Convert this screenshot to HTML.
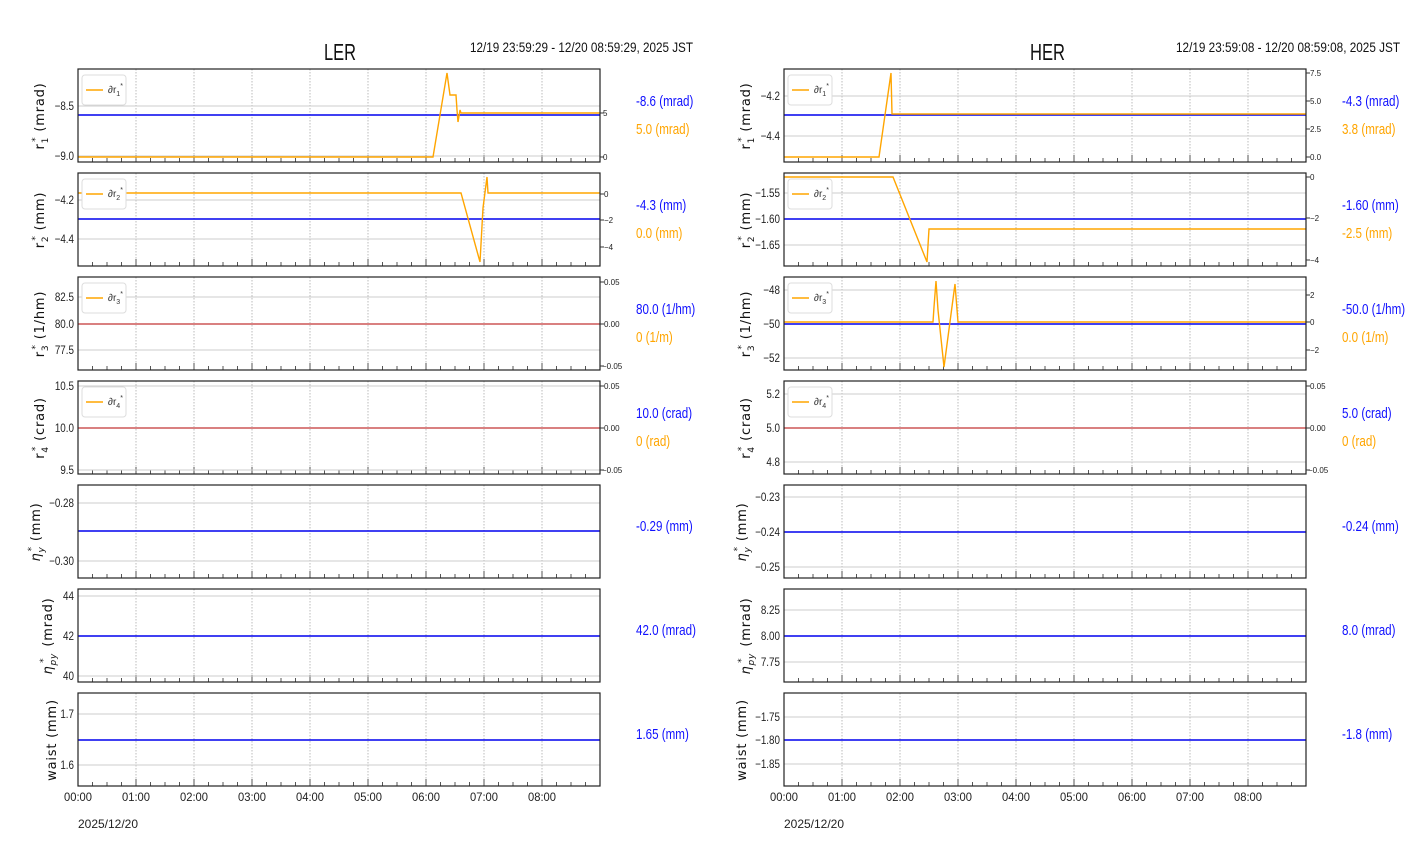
<!DOCTYPE html>
<html><head><meta charset="utf-8"><style>
html,body{margin:0;padding:0;background:#fff;width:1412px;height:864px;overflow:hidden}
svg{display:block}
text{font-family:"Liberation Sans Narrow","Liberation Sans",sans-serif}
.t{font-size:12px;fill:#222}
.r{font-size:8px;fill:#222}
.yl{font-family:"DejaVu Sans","Liberation Sans",sans-serif;font-size:13px;fill:#111;letter-spacing:0.8px}
.b{font-size:14.5px;fill:#1010ff}
.o{font-size:14.5px;fill:#ffa500}
.g{stroke:#ccc;stroke-width:1}
.fr{fill:none;stroke:#222;stroke-width:1.2}
.bl{stroke:#0000ee;stroke-width:1.6}
.or{fill:none;stroke:#ffa500;stroke-width:1.4}
.lg{fill:#fff;stroke:#ddd;stroke-width:1}
.lt{font-size:10px;fill:#333}
</style></head><body>
<svg width="1412" height="864" viewBox="0 0 1412 864" xmlns="http://www.w3.org/2000/svg">
<defs>
<g id="vg">
<path d="M58 0V93M116 0V93M174 0V93M232 0V93M290 0V93M348 0V93M406 0V93M464 0V93" stroke="#bbb" stroke-width="1" stroke-dasharray="1.5,1.5"/>
<path d="M58 93v-7M116 93v-7M174 93v-7M232 93v-7M290 93v-7M348 93v-7M406 93v-7M464 93v-7" stroke="#555" stroke-width="1"/>
<path d="M14.5 93v-4M29 93v-4M43.5 93v-4M72.5 93v-4M87 93v-4M101.5 93v-4M130.5 93v-4M145 93v-4M159.5 93v-4M188.5 93v-4M203 93v-4M217.5 93v-4M246.5 93v-4M261 93v-4M275.5 93v-4M304.5 93v-4M319 93v-4M333.5 93v-4M362.5 93v-4M377 93v-4M391.5 93v-4M420.5 93v-4M435 93v-4M449.5 93v-4M478.5 93v-4M493 93v-4M507.5 93v-4" stroke="#555" stroke-width="1"/>
</g>
</defs>

<!-- titles -->
<text x="324" y="60" textLength="32" lengthAdjust="spacingAndGlyphs" font-size="23" fill="#111">LER</text>
<text x="470" y="52" textLength="223" lengthAdjust="spacingAndGlyphs" font-size="14" fill="#111">12/19 23:59:29 - 12/20 08:59:29, 2025 JST</text>
<text x="1030" y="60" textLength="35" lengthAdjust="spacingAndGlyphs" font-size="23" fill="#111">HER</text>
<text x="1176" y="52" textLength="224" lengthAdjust="spacingAndGlyphs" font-size="14" fill="#111">12/19 23:59:08 - 12/20 08:59:08, 2025 JST</text>

<!-- ================= LEFT ================= -->
<g>
<use href="#vg" x="78" y="69"/>
<path class="g" d="M78 106H600M78 156H600"/>
<line class="bl" x1="78" y1="115" x2="600" y2="115"/>
<polyline class="or" points="78,157 433,157 447,73 450,95 456,95 457,110 458,122 460,110 461,113 600,113"/>
<rect class="fr" x="78" y="69" width="522" height="93"/>
<path d="M600 113h4M600 157h4" stroke="#333"/>
<text class="r" x="603" y="116">5</text><text class="r" x="603" y="160">0</text>
<rect class="lg" x="82" y="75" width="44" height="30" rx="3"/><line x1="86" y1="90" x2="103" y2="90" stroke="#ffa500" stroke-width="1.5"/><text class="lt" x="108" y="93">∂r<tspan font-size="7" dy="3">1</tspan><tspan font-size="7" dy="-8">*</tspan></text>
<text class="yl" transform="translate(44,116) rotate(-90)" text-anchor="middle">r<tspan font-size="9" dy="4">1</tspan><tspan font-size="9" dx="-5" dy="-10">*</tspan><tspan dy="6"> (mrad)</tspan></text>

<use href="#vg" x="78" y="173"/>
<path class="g" d="M78 200H600M78 239H600"/>
<line class="bl" x1="78" y1="219" x2="600" y2="219"/>
<polyline class="or" points="78,193 461,193 480,262 483,208 487,177 488,193 600,193"/>
<rect class="fr" x="78" y="173" width="522" height="93"/>
<path d="M600 194h4M600 220h4M600 247h4" stroke="#333"/>
<text class="r" x="604" y="197">0</text><text class="r" x="604" y="223">−2</text><text class="r" x="604" y="250">−4</text>
<rect class="lg" x="82" y="179" width="44" height="30" rx="3"/><line x1="86" y1="194" x2="103" y2="194" stroke="#ffa500" stroke-width="1.5"/><text class="lt" x="108" y="197">∂r<tspan font-size="7" dy="3">2</tspan><tspan font-size="7" dy="-8">*</tspan></text>
<text class="yl" transform="translate(44,220) rotate(-90)" text-anchor="middle">r<tspan font-size="9" dy="4">2</tspan><tspan font-size="9" dx="-5" dy="-10">*</tspan><tspan dy="6"> (mm)</tspan></text>

<use href="#vg" x="78" y="277"/>
<path class="g" d="M78 297H600M78 324H600M78 350H600"/>
<line x1="78" y1="324" x2="600" y2="324" stroke="#d98080" stroke-width="2"/>
<rect class="fr" x="78" y="277" width="522" height="93"/>
<path d="M600 282h4M600 324h4M600 366h4" stroke="#333"/>
<text class="r" x="604" y="285">0.05</text><text class="r" x="604" y="327">0.00</text><text class="r" x="602" y="369">−0.05</text>
<rect class="lg" x="82" y="283" width="44" height="30" rx="3"/><line x1="86" y1="298" x2="103" y2="298" stroke="#ffa500" stroke-width="1.5"/><text class="lt" x="108" y="301">∂r<tspan font-size="7" dy="3">3</tspan><tspan font-size="7" dy="-8">*</tspan></text>
<text class="yl" transform="translate(44,324) rotate(-90)" text-anchor="middle">r<tspan font-size="9" dy="4">3</tspan><tspan font-size="9" dx="-5" dy="-10">*</tspan><tspan dy="6"> (1/hm)</tspan></text>

<use href="#vg" x="78" y="381"/>
<path class="g" d="M78 386H600M78 428H600M78 470H600"/>
<line x1="78" y1="428" x2="600" y2="428" stroke="#d98080" stroke-width="2"/>
<rect class="fr" x="78" y="381" width="522" height="93"/>
<path d="M600 386h4M600 428h4M600 470h4" stroke="#333"/>
<text class="r" x="604" y="389">0.05</text><text class="r" x="604" y="431">0.00</text><text class="r" x="602" y="473">−0.05</text>
<rect class="lg" x="82" y="387" width="44" height="30" rx="3"/><line x1="86" y1="402" x2="103" y2="402" stroke="#ffa500" stroke-width="1.5"/><text class="lt" x="108" y="405">∂r<tspan font-size="7" dy="3">4</tspan><tspan font-size="7" dy="-8">*</tspan></text>
<text class="yl" transform="translate(44,428) rotate(-90)" text-anchor="middle">r<tspan font-size="9" dy="4">4</tspan><tspan font-size="9" dx="-5" dy="-10">*</tspan><tspan dy="6"> (crad)</tspan></text>

<use href="#vg" x="78" y="485"/>
<path class="g" d="M78 503H600M78 561H600"/>
<line class="bl" x1="78" y1="531" x2="600" y2="531"/>
<rect class="fr" x="78" y="485" width="522" height="93"/>
<text class="yl" transform="translate(40,532) rotate(-90)" text-anchor="middle"><tspan font-style="italic">η</tspan><tspan font-size="9" font-style="italic" dy="4">y</tspan><tspan font-size="9" dx="-5" dy="-10">*</tspan><tspan dy="6"> (mm)</tspan></text>

<use href="#vg" x="78" y="589"/>
<path class="g" d="M78 596H600M78 636H600M78 676H600"/>
<line class="bl" x1="78" y1="636" x2="600" y2="636"/>
<rect class="fr" x="78" y="589" width="522" height="93"/>
<text class="yl" transform="translate(52,636) rotate(-90)" text-anchor="middle"><tspan font-style="italic">η</tspan><tspan font-size="9" font-style="italic" dy="4">py</tspan><tspan font-size="9" dx="-10" dy="-10">*</tspan><tspan dy="6" dx="6"> (mrad)</tspan></text>

<use href="#vg" x="78" y="693"/>
<path class="g" d="M78 714H600M78 765H600"/>
<line class="bl" x1="78" y1="740" x2="600" y2="740"/>
<rect class="fr" x="78" y="693" width="522" height="93"/>
<text class="yl" transform="translate(56,740) rotate(-90)" text-anchor="middle">waist (mm)</text>

<!-- left y tick labels (condensed) -->
<g transform="translate(74,0) scale(0.82,1) translate(-74,0)" class="t" text-anchor="end">
<text x="74" y="110">−8.5</text><text x="74" y="160">−9.0</text>
<text x="74" y="204">−4.2</text><text x="74" y="243">−4.4</text>
<text x="74" y="301">82.5</text><text x="74" y="328">80.0</text><text x="74" y="354">77.5</text>
<text x="74" y="390">10.5</text><text x="74" y="432">10.0</text><text x="74" y="474">9.5</text>
<text x="74" y="507">−0.28</text><text x="74" y="565">−0.30</text>
<text x="74" y="600">44</text><text x="74" y="640">42</text><text x="74" y="680">40</text>
<text x="74" y="718">1.7</text><text x="74" y="769">1.6</text>
</g>
<!-- left value labels -->
<g transform="translate(636,0) scale(0.8,1) translate(-636,0)">
<text class="b" x="636" y="106">-8.6 (mrad)</text><text class="o" x="636" y="134">5.0 (mrad)</text>
<text class="b" x="636" y="210">-4.3 (mm)</text><text class="o" x="636" y="238">0.0 (mm)</text>
<text class="b" x="636" y="314">80.0 (1/hm)</text><text class="o" x="636" y="342">0 (1/m)</text>
<text class="b" x="636" y="418">10.0 (crad)</text><text class="o" x="636" y="446">0 (rad)</text>
<text class="b" x="636" y="531">-0.29 (mm)</text>
<text class="b" x="636" y="635">42.0 (mrad)</text>
<text class="b" x="636" y="739">1.65 (mm)</text>
</g>

<g class="t">
<text x="64" y="801" textLength="28" lengthAdjust="spacingAndGlyphs">00:00</text><text x="122" y="801" textLength="28" lengthAdjust="spacingAndGlyphs">01:00</text><text x="180" y="801" textLength="28" lengthAdjust="spacingAndGlyphs">02:00</text><text x="238" y="801" textLength="28" lengthAdjust="spacingAndGlyphs">03:00</text><text x="296" y="801" textLength="28" lengthAdjust="spacingAndGlyphs">04:00</text><text x="354" y="801" textLength="28" lengthAdjust="spacingAndGlyphs">05:00</text><text x="412" y="801" textLength="28" lengthAdjust="spacingAndGlyphs">06:00</text><text x="470" y="801" textLength="28" lengthAdjust="spacingAndGlyphs">07:00</text><text x="528" y="801" textLength="28" lengthAdjust="spacingAndGlyphs">08:00</text>
</g>
<text class="t" x="78" y="828" font-size="14" textLength="60" lengthAdjust="spacingAndGlyphs">2025/12/20</text>
</g>

<!-- ================= RIGHT ================= -->
<g>
<use href="#vg" x="784" y="69"/>
<path class="g" d="M784 96H1306M784 136H1306"/>
<line class="bl" x1="784" y1="115" x2="1306" y2="115"/>
<polyline class="or" points="784,157 879,157 891,73 892,114 1306,114"/>
<rect class="fr" x="784" y="69" width="522" height="93"/>
<path d="M1306 73h4M1306 101h4M1306 129h4M1306 157h4" stroke="#333"/>
<text class="r" x="1310" y="76">7.5</text><text class="r" x="1310" y="104">5.0</text><text class="r" x="1310" y="132">2.5</text><text class="r" x="1310" y="160">0.0</text>
<rect class="lg" x="788" y="75" width="44" height="30" rx="3"/><line x1="792" y1="90" x2="809" y2="90" stroke="#ffa500" stroke-width="1.5"/><text class="lt" x="814" y="93">∂r<tspan font-size="7" dy="3">1</tspan><tspan font-size="7" dy="-8">*</tspan></text>
<text class="yl" transform="translate(750,116) rotate(-90)" text-anchor="middle">r<tspan font-size="9" dy="4">1</tspan><tspan font-size="9" dx="-5" dy="-10">*</tspan><tspan dy="6"> (mrad)</tspan></text>

<use href="#vg" x="784" y="173"/>
<path class="g" d="M784 193H1306M784 219H1306M784 245H1306"/>
<line class="bl" x1="784" y1="219" x2="1306" y2="219"/>
<polyline class="or" points="784,177 893,177 927,262 929,229 1306,229"/>
<rect class="fr" x="784" y="173" width="522" height="93"/>
<path d="M1306 177h4M1306 218h4M1306 260h4" stroke="#333"/>
<text class="r" x="1310" y="180">0</text><text class="r" x="1310" y="221">−2</text><text class="r" x="1310" y="263">−4</text>
<rect class="lg" x="788" y="179" width="44" height="30" rx="3"/><line x1="792" y1="194" x2="809" y2="194" stroke="#ffa500" stroke-width="1.5"/><text class="lt" x="814" y="197">∂r<tspan font-size="7" dy="3">2</tspan><tspan font-size="7" dy="-8">*</tspan></text>
<text class="yl" transform="translate(750,220) rotate(-90)" text-anchor="middle">r<tspan font-size="9" dy="4">2</tspan><tspan font-size="9" dx="-5" dy="-10">*</tspan><tspan dy="6"> (mm)</tspan></text>

<use href="#vg" x="784" y="277"/>
<path class="g" d="M784 290H1306M784 324H1306M784 358H1306"/>
<line class="bl" x1="784" y1="324" x2="1306" y2="324"/>
<polyline class="or" points="784,322 933,322 934,307 936,281 938,310 944,367 955,284 958,322 1306,322"/>
<rect class="fr" x="784" y="277" width="522" height="93"/>
<path d="M1306 295h4M1306 322h4M1306 350h4" stroke="#333"/>
<text class="r" x="1310" y="298">2</text><text class="r" x="1310" y="325">0</text><text class="r" x="1310" y="353">−2</text>
<rect class="lg" x="788" y="283" width="44" height="30" rx="3"/><line x1="792" y1="298" x2="809" y2="298" stroke="#ffa500" stroke-width="1.5"/><text class="lt" x="814" y="301">∂r<tspan font-size="7" dy="3">3</tspan><tspan font-size="7" dy="-8">*</tspan></text>
<text class="yl" transform="translate(750,324) rotate(-90)" text-anchor="middle">r<tspan font-size="9" dy="4">3</tspan><tspan font-size="9" dx="-5" dy="-10">*</tspan><tspan dy="6"> (1/hm)</tspan></text>

<use href="#vg" x="784" y="381"/>
<path class="g" d="M784 394H1306M784 428H1306M784 462H1306"/>
<line x1="784" y1="428" x2="1306" y2="428" stroke="#d98080" stroke-width="2"/>
<rect class="fr" x="784" y="381" width="522" height="93"/>
<path d="M1306 386h4M1306 428h4M1306 470h4" stroke="#333"/>
<text class="r" x="1310" y="389">0.05</text><text class="r" x="1310" y="431">0.00</text><text class="r" x="1308" y="473">−0.05</text>
<rect class="lg" x="788" y="387" width="44" height="30" rx="3"/><line x1="792" y1="402" x2="809" y2="402" stroke="#ffa500" stroke-width="1.5"/><text class="lt" x="814" y="405">∂r<tspan font-size="7" dy="3">4</tspan><tspan font-size="7" dy="-8">*</tspan></text>
<text class="yl" transform="translate(750,428) rotate(-90)" text-anchor="middle">r<tspan font-size="9" dy="4">4</tspan><tspan font-size="9" dx="-5" dy="-10">*</tspan><tspan dy="6"> (crad)</tspan></text>

<use href="#vg" x="784" y="485"/>
<path class="g" d="M784 497H1306M784 532H1306M784 567H1306"/>
<line class="bl" x1="784" y1="532" x2="1306" y2="532"/>
<rect class="fr" x="784" y="485" width="522" height="93"/>
<text class="yl" transform="translate(746,532) rotate(-90)" text-anchor="middle"><tspan font-style="italic">η</tspan><tspan font-size="9" font-style="italic" dy="4">y</tspan><tspan font-size="9" dx="-5" dy="-10">*</tspan><tspan dy="6"> (mm)</tspan></text>

<use href="#vg" x="784" y="589"/>
<path class="g" d="M784 610H1306M784 636H1306M784 662H1306"/>
<line class="bl" x1="784" y1="636" x2="1306" y2="636"/>
<rect class="fr" x="784" y="589" width="522" height="93"/>
<text class="yl" transform="translate(750,636) rotate(-90)" text-anchor="middle"><tspan font-style="italic">η</tspan><tspan font-size="9" font-style="italic" dy="4">py</tspan><tspan font-size="9" dx="-10" dy="-10">*</tspan><tspan dy="6" dx="6"> (mrad)</tspan></text>

<use href="#vg" x="784" y="693"/>
<path class="g" d="M784 717H1306M784 740H1306M784 764H1306"/>
<line class="bl" x1="784" y1="740" x2="1306" y2="740"/>
<rect class="fr" x="784" y="693" width="522" height="93"/>
<text class="yl" transform="translate(746,740) rotate(-90)" text-anchor="middle">waist (mm)</text>

<g transform="translate(780,0) scale(0.82,1) translate(-780,0)" class="t" text-anchor="end">
<text x="780" y="100">−4.2</text><text x="780" y="140">−4.4</text>
<text x="780" y="197">−1.55</text><text x="780" y="223">−1.60</text><text x="780" y="249">−1.65</text>
<text x="780" y="294">−48</text><text x="780" y="328">−50</text><text x="780" y="362">−52</text>
<text x="780" y="398">5.2</text><text x="780" y="432">5.0</text><text x="780" y="466">4.8</text>
<text x="780" y="501">−0.23</text><text x="780" y="536">−0.24</text><text x="780" y="571">−0.25</text>
<text x="780" y="614">8.25</text><text x="780" y="640">8.00</text><text x="780" y="666">7.75</text>
<text x="780" y="721">−1.75</text><text x="780" y="744">−1.80</text><text x="780" y="768">−1.85</text>
</g>
<g transform="translate(1342,0) scale(0.8,1) translate(-1342,0)">
<text class="b" x="1342" y="106">-4.3 (mrad)</text><text class="o" x="1342" y="134">3.8 (mrad)</text>
<text class="b" x="1342" y="210">-1.60 (mm)</text><text class="o" x="1342" y="238">-2.5 (mm)</text>
<text class="b" x="1342" y="314">-50.0 (1/hm)</text><text class="o" x="1342" y="342">0.0 (1/m)</text>
<text class="b" x="1342" y="418">5.0 (crad)</text><text class="o" x="1342" y="446">0 (rad)</text>
<text class="b" x="1342" y="531">-0.24 (mm)</text>
<text class="b" x="1342" y="635">8.0 (mrad)</text>
<text class="b" x="1342" y="739">-1.8 (mm)</text>
</g>

<g class="t">
<text x="770" y="801" textLength="28" lengthAdjust="spacingAndGlyphs">00:00</text><text x="828" y="801" textLength="28" lengthAdjust="spacingAndGlyphs">01:00</text><text x="886" y="801" textLength="28" lengthAdjust="spacingAndGlyphs">02:00</text><text x="944" y="801" textLength="28" lengthAdjust="spacingAndGlyphs">03:00</text><text x="1002" y="801" textLength="28" lengthAdjust="spacingAndGlyphs">04:00</text><text x="1060" y="801" textLength="28" lengthAdjust="spacingAndGlyphs">05:00</text><text x="1118" y="801" textLength="28" lengthAdjust="spacingAndGlyphs">06:00</text><text x="1176" y="801" textLength="28" lengthAdjust="spacingAndGlyphs">07:00</text><text x="1234" y="801" textLength="28" lengthAdjust="spacingAndGlyphs">08:00</text>
</g>
<text class="t" x="784" y="828" font-size="14" textLength="60" lengthAdjust="spacingAndGlyphs">2025/12/20</text>
</g>
</svg>
</body></html>
